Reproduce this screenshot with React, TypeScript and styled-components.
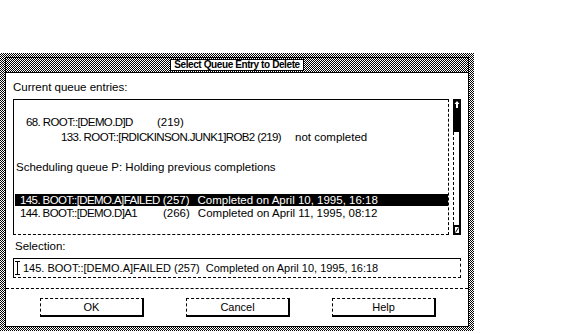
import React from "react";
import styled, { createGlobalStyle, css } from "styled-components";

const Global = createGlobalStyle`
  html, body { margin: 0; padding: 0; background: #fff; }
  body { font-family: "Liberation Sans", Arial, sans-serif; color: #000; }
  * { box-sizing: border-box; }
`;

const checker = css`
  background-color: #fff;
  background-image: repeating-linear-gradient(90deg, #fff 0px, #fff 1px, #000 1px, #000 2px),
    repeating-linear-gradient(180deg, #fff 0px, #fff 1px, #000 1px, #000 2px);
  background-blend-mode: difference;
`;

const Screen = styled.div`
  width: 569px;
  height: 334px;
  padding-top: 53px;
  overflow: hidden;
`;

const Dialog = styled.div`
  width: 474px;
  height: 278px;
  padding: 4px 5px 4px 5px;
  display: flex;
  ${checker}
`;

const Inner = styled.div`
  flex: 1;
  display: flex;
  flex-direction: column;
  border: 1px solid #000;
  background: #fff;
`;

const TitleBar = styled.div`
  height: 15px;
  border-bottom: 1px solid #000;
  display: flex;
  align-items: center;
  justify-content: center;
  ${checker}
`;

const Title = styled.div`
  height: 12px;
  border: 1px solid #000;
  background: #fff;
  font-size: 10px;
  line-height: 10px;
  font-weight: bold;
  letter-spacing: -0.4px;
  padding: 0 3px;
  white-space: nowrap;
`;

const Body = styled.div`
  flex: 1;
  display: flex;
  flex-direction: column;
`;

const Main = styled.div`
  padding: 7px 7px 0 7px;
  display: flex;
  flex-direction: column;
`;

const Label = styled.div<{ $indent?: number; $mt?: number }>`
  font-size: 11.5px;
  line-height: 14px;
  height: 14px;
  padding-left: ${(p) => p.$indent ?? 0}px;
  margin-top: ${(p) => p.$mt ?? 0}px;
  white-space: nowrap;
`;

const ListRow = styled.div`
  display: flex;
  gap: 4px;
  height: 136px;
  margin-top: 5px;
`;

const List = styled.div`
  flex: 1;
  border-top: 1px solid #000;
  border-left: 1px solid #000;
  border-right: 1px dashed #000;
  border-bottom: 1px dashed #000;
  padding-top: 15px;
  overflow: hidden;
  font-size: 11.5px;
`;

const Row = styled.div<{ $indent: number; $selected?: boolean; $mt?: number }>`
  height: ${(p) => (p.$selected ? 12 : 15)}px;
  line-height: ${(p) => (p.$selected ? 12 : 15)}px;
  margin-left: 1px;
  margin-top: ${(p) => p.$mt ?? 0}px;
  padding-left: ${(p) => p.$indent}px;
  white-space: nowrap;
  background: ${(p) => (p.$selected ? "#000" : "transparent")};
  color: ${(p) => (p.$selected ? "#fff" : "#000")};
`;

const Col = styled.span<{ $w?: number; $tight?: boolean; $gap?: number }>`
  display: inline-block;
  min-width: ${(p) => p.$w ?? 0}px;
  padding-right: ${(p) => p.$gap ?? 3}px;
  letter-spacing: ${(p) => (p.$tight ? "-0.6px" : "0")};
  white-space: pre;
`;

const Scroll = styled.div`
  width: 8px;
  display: flex;
  flex-direction: column;
`;

const ScrollTop = styled.div`
  height: 33px;
  background: #000;
  display: flex;
  justify-content: center;
  padding-top: 1px;
`;

const Track = styled.div`
  flex: 1;
  border-left: 1px dashed #000;
  border-right: 2px solid #000;
`;

const ScrollBottom = styled.div`
  height: 10px;
  border: 2px solid #000;
  background: #fff;
  display: flex;
  align-items: center;
  justify-content: center;
`;

const Field = styled.div`
  height: 20px;
  margin-top: 5px;
  border-top: 1px solid #000;
  border-left: 1px solid #000;
  border-right: 1px dashed #000;
  border-bottom: 1px dashed #000;
  display: flex;
  align-items: center;
  padding-left: 1px;
  font-size: 11px;
  white-space: pre;
  gap: 3px;
`;

const Separator = styled.div`
  margin-top: 10px;
  border-top: 1px dashed #000;
`;

const ButtonRow = styled.div`
  display: flex;
  gap: 42px;
  padding-left: 34px;
  margin-top: 9px;
`;

const Button = styled.div`
  width: 104px;
  height: 19px;
  border-top: 1px dashed #000;
  border-left: 1px dashed #000;
  border-right: 2px solid #000;
  border-bottom: 2px solid #000;
  display: flex;
  align-items: center;
  justify-content: center;
  font-size: 11px;
`;

const UpArrow = () => (
  <svg width="8" height="9" viewBox="0 0 8 9">
    <path d="M4 1 L1.5 4 H3 V8 H5 V4 H6.5 Z" fill="#fff" />
  </svg>
);

const DownMark = () => (
  <svg width="4" height="6" viewBox="0 0 4 6">
    <path d="M3.5 0.5 L0.5 5.5" stroke="#000" strokeWidth="1" />
  </svg>
);

const IBeam = () => (
  <svg width="5" height="14" viewBox="0 0 5 14">
    <path d="M0 0.5 H5 M2.5 0.5 V13.5 M0 13.5 H5" stroke="#000" strokeWidth="1" fill="none" />
  </svg>
);

export default function App() {
  return (
    <>
      <Global />
      <Screen>
        <Dialog>
          <Inner>
            <TitleBar>
              <Title>Select Queue Entry to Delete</Title>
            </TitleBar>
            <Body>
              <Main>
                <Label>Current queue entries:</Label>
                <ListRow>
                  <List>
                    <Row $indent={11}>
                      <Col $w={131} $tight>68. ROOT::[DEMO.D]D</Col>
                      <Col>(219)</Col>
                    </Row>
                    <Row $indent={46}>
                      <Col $w={234} $tight>133. ROOT::[RDICKINSON.JUNK1]ROB2 (219)</Col>
                      <Col>not completed</Col>
                    </Row>
                    <Row $indent={1} $mt={15}>
                      Scheduling queue P: Holding previous completions
                    </Row>
                    <Row $indent={5} $mt={19} $selected>
                      <Col $w={132} $tight>145. BOOT::[DEMO.A]FAILED</Col>
                      <Col $w={25} $gap={8}>(257)</Col>
                      <Col>Completed on April 10, 1995, 16:18</Col>
                    </Row>
                    <Row $indent={5}>
                      <Col $w={143} $tight>144. BOOT::[DEMO.D]A1</Col>
                      <Col $w={29} $gap={8}>(266)</Col>
                      <Col>Completed on April 11, 1995, 08:12</Col>
                    </Row>
                  </List>
                  <Scroll>
                    <ScrollTop>
                      <UpArrow />
                    </ScrollTop>
                    <Track />
                    <ScrollBottom>
                      <DownMark />
                    </ScrollBottom>
                  </Scroll>
                </ListRow>
                <Label $indent={2} $mt={4}>Selection:</Label>
                <Field>
                  <IBeam />
                  <span>145. BOOT::[DEMO.A]FAILED (257)  Completed on April 10, 1995, 16:18</span>
                </Field>
              </Main>
              <Separator />
              <ButtonRow>
                <Button>OK</Button>
                <Button>Cancel</Button>
                <Button>Help</Button>
              </ButtonRow>
            </Body>
          </Inner>
        </Dialog>
      </Screen>
    </>
  );
}
